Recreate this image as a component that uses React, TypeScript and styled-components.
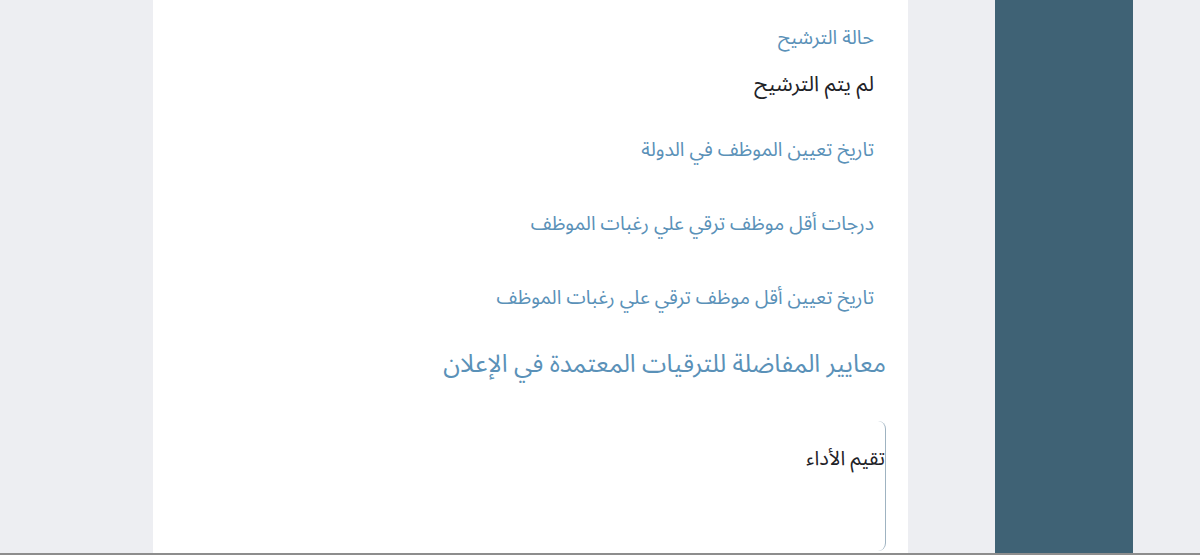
import styled, { createGlobalStyle } from "styled-components";

const GlobalStyle = createGlobalStyle`
  html, body {
    margin: 0;
    padding: 0;
    background: #edeef2;
    font-family: "Noto Sans Arabic", "DejaVu Sans", sans-serif;
  }
`;

const Page = styled.div`
  direction: rtl;
  display: flex;
  align-items: stretch;
  height: 553px;
  padding-right: 67px;
  border-bottom: 2px solid #8d8d8d;
  overflow: hidden;
`;

const Sidebar = styled.aside`
  width: 138px;
  flex-shrink: 0;
  background: #3f6275;
`;

const Card = styled.main`
  width: 755px;
  flex-shrink: 0;
  margin-right: 87px;
  background: #ffffff;
  padding: 20px 22px 0 22px;
  box-sizing: border-box;
`;

const Field = styled.div<{ $top?: number }>`
  padding-right: 12px;
  margin-top: ${(p) => p.$top ?? 0}px;
`;

const Label = styled.div`
  color: #5a91b8;
  font-size: 19.5px;
  line-height: 36px;
`;

const Value = styled.div`
  color: #1f2328;
  font-size: 21.3px;
  line-height: 42px;
  margin-top: 8px;
`;

const Heading = styled.h3`
  margin: 28px 0 0;
  color: #5a91b8;
  font-size: 24.7px;
  font-weight: 400;
  line-height: 40px;
`;

const TextBox = styled.div`
  margin-top: 37px;
  height: 130px;
  border-right: 1px solid #9fb3c1;
  border-radius: 0 8px 8px 0;
  color: #1f2328;
  font-size: 20px;
  padding-top: 17px;
  box-sizing: border-box;
`;

const fields = [
  "تاريخ تعيين الموظف في الدولة",
  "درجات أقل موظف ترقي علي رغبات الموظف",
  "تاريخ تعيين أقل موظف ترقي علي رغبات الموظف",
];

export default function App() {
  return (
    <>
      <GlobalStyle />
      <Page>
        <Sidebar />
        <Card>
          <Field>
            <Label>حالة الترشيح</Label>
            <Value>لم يتم الترشيح</Value>
          </Field>
          {fields.map((f, i) => (
            <Field key={f} $top={i === 0 ? 26 : 38}>
              <Label>{f}</Label>
            </Field>
          ))}
          <Heading>معايير المفاضلة للترقيات المعتمدة في الإعلان</Heading>
          <TextBox>تقيم الأداء</TextBox>
        </Card>
      </Page>
    </>
  );
}
